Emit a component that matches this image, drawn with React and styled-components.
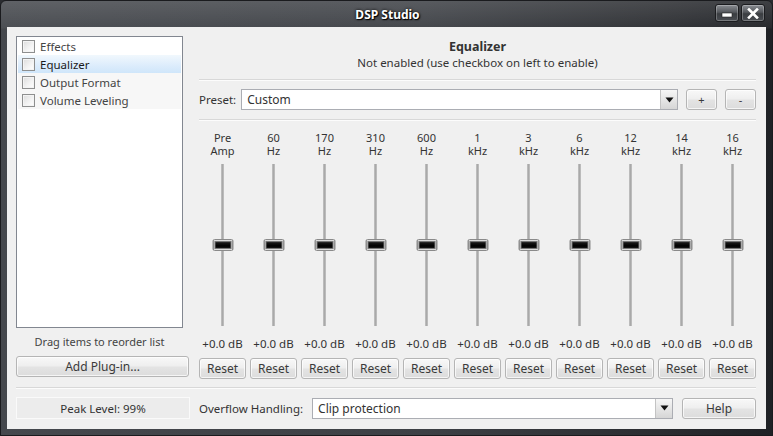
import React from 'react';
import styled, { createGlobalStyle } from 'styled-components';

const GlobalStyle = createGlobalStyle`
  html, body { margin: 0; padding: 0; background: #2a2c30; }
  body { font-family: "Noto Sans", "Open Sans", sans-serif; font-size: 11.5px; color: #3c3c3c; }
  * { box-sizing: border-box; }
`;

const plugins = [
  { name: 'Effects' },
  { name: 'Equalizer', selected: true },
  { name: 'Output Format', shaded: true },
  { name: 'Volume Leveling', shaded: true },
];

const bands = [
  ['Pre', 'Amp'], ['60', 'Hz'], ['170', 'Hz'], ['310', 'Hz'], ['600', 'Hz'],
  ['1', 'kHz'], ['3', 'kHz'], ['6', 'kHz'], ['12', 'kHz'], ['14', 'kHz'], ['16', 'kHz'],
];

const Chevron = () => (
  <svg width="9" height="6" viewBox="0 0 9 6">
    <path d="M0.5 0.5 L8.5 0.5 L4.5 5.5 Z" fill="#111" />
  </svg>
);

const Select = ({ value }) => (
  <SelectBox>
    <span>{value}</span>
    <ArrowButton><Chevron /></ArrowButton>
  </SelectBox>
);

export default function App() {
  return (
    <>
      <GlobalStyle />
      <Window>
        <TitleBar>
          <Title>DSP Studio</Title>
          <Caption>
            <CaptionButton>
              <svg width="12" height="10" viewBox="0 0 12 10">
                <rect x="1" y="5" width="10" height="4" fill="#fff" stroke="#222" strokeWidth="0.6" />
              </svg>
            </CaptionButton>
            <CaptionButton>
              <svg width="12" height="11" viewBox="0 0 12 11">
                <path d="M2 1.5 L10 9.5 M10 1.5 L2 9.5" stroke="#fff" strokeWidth="2.6" strokeLinecap="square" />
              </svg>
            </CaptionButton>
          </Caption>
        </TitleBar>

        <Client>
          <TopArea>
            <LeftColumn>
              <ListBox>
                {plugins.map(p => (
                  <ListItem key={p.name} $selected={p.selected} $shaded={p.shaded}>
                    <CheckBox />
                    {p.name}
                  </ListItem>
                ))}
              </ListBox>
              <Hint>Drag items to reorder list</Hint>
              <Button $wide>Add Plug-in...</Button>
            </LeftColumn>

            <RightColumn>
              <Header>
                <h2>Equalizer</h2>
                <p>Not enabled (use checkbox on left to enable)</p>
              </Header>
              <Separator $top />
              <PresetRow>
                <Label>Preset:</Label>
                <Select value="Custom" />
                <SmallButton>+</SmallButton>
                <SmallButton>-</SmallButton>
              </PresetRow>
              <Separator />
              <Bands>
                {bands.map(([top, unit]) => (
                  <Band key={top}>
                    <BandLabel>
                      <span>{top}</span>
                      <span>{unit}</span>
                    </BandLabel>
                    <Track>
                      <Thumb />
                    </Track>
                    <Value>+0.0 dB</Value>
                    <Button>Reset</Button>
                  </Band>
                ))}
              </Bands>
            </RightColumn>
          </TopArea>

          <Separator />

          <BottomRow>
            <PeakBox>Peak Level: 99%</PeakBox>
            <Label $overflow>Overflow Handling:</Label>
            <Select value="Clip protection" />
            <Button $help>Help</Button>
          </BottomRow>
        </Client>
      </Window>
    </>
  );
}

const Window = styled.div`
  width: 773px; height: 436px;
  display: flex; flex-direction: column;
  border-radius: 6px 6px 0 0;
  background:
    linear-gradient(180deg, rgba(255,255,255,0.14) 0, rgba(255,255,255,0.04) 27px, rgba(0,0,0,0) 28px),
    linear-gradient(90deg, #45484d 0, #3d4045 55%, #2b2d31 85%, #1f2125 100%);
  border: 1px solid #1a1b1e;
`;

const TitleBar = styled.div`
  height: 26px; flex: none;
  display: flex; align-items: center; justify-content: center;
  position: relative;
`;

const Title = styled.div`
  font-family: "Noto Sans", sans-serif; font-weight: 700; font-size: 12px;
  color: #fff; text-shadow: 0 0 3px #000, 1px 1px 1px #000;
  margin-left: 2px;
`;

const Caption = styled.div`
  position: absolute; right: 7px; top: 3px;
  display: flex; gap: 2px;
`;

const CaptionButton = styled.div`
  width: 24px; height: 18px;
  display: flex; align-items: center; justify-content: center;
  border: 1px solid #1b1c1f; border-radius: 3px;
  background: linear-gradient(180deg, #8a8d92 0, #55585d 45%, #3a3d41 55%, #4a4d52 100%);
  box-shadow: inset 0 0 0 1px rgba(255,255,255,0.25);
`;

const Client = styled.div`
  flex: 1;
  margin: 0 6px 6px 6px;
  background: #f0f0f0;
  padding: 9px 10px 0 9px;
  display: flex; flex-direction: column;
`;

const TopArea = styled.div`
  display: flex; gap: 9px; height: 342px;
`;

const LeftColumn = styled.div`
  width: 174px; flex: none;
  display: flex; flex-direction: column;
`;

const ListBox = styled.div`
  width: 167px; height: 292px;
  background: #fff;
  border: 1px solid #828790;
  padding: 0 1px;
`;

const ListItem = styled.div`
  height: 18px;
  display: flex; align-items: center; gap: 5px;
  padding-left: 4px;
  color: ${({ $selected }) => $selected ? '#1a1a1a' : '#444'};
  background: ${({ $selected, $shaded }) =>
    $selected ? 'linear-gradient(180deg, #f1f8fd 0, #dcecfc 60%, #cfe6fa 100%)'
      : $shaded ? '#f7f7f7' : 'transparent'};
`;

const CheckBox = styled.span`
  width: 13px; height: 13px; flex: none;
  border: 1px solid #8e8f8f;
  background: linear-gradient(135deg, #dcdcdc 0, #f4f4f4 60%, #fff 100%);
  box-shadow: inset 0 0 0 1px #f4f4f4;
`;

const Hint = styled.div`
  width: 167px; text-align: center;
  margin-top: 6px; line-height: 15px;
  color: #444;
  font-size: 11px;
`;

const Button = styled.div`
  height: 21px; flex: none;
  width: ${({ $wide, $help }) => $wide ? '173px' : $help ? '74px' : '47px'};
  margin-top: ${({ $wide }) => $wide ? '7px' : '0'};
  display: flex; align-items: center; justify-content: center;
  border: 1px solid #b5b5b5; border-radius: 3px;
  background: linear-gradient(180deg, #f8f8f8 0, #efefef 45%, #e3e3e3 55%, #dcdcdc 100%);
  box-shadow: inset 0 0 0 1px rgba(255,255,255,0.7);
  color: #3a3a3a;
  font-size: 12px;
`;

const SmallButton = styled(Button)`
  width: 31px; height: 21px; font-size: 11px;
`;

const RightColumn = styled.div`
  flex: 1;
  display: flex; flex-direction: column;
`;

const Header = styled.div`
  text-align: center; padding-top: 2px;
  h2 { margin: 0; font-size: 12.5px; font-weight: 700; color: #333; line-height: 17px; }
  p { margin: 0; line-height: 16px; color: #333; }
`;

const Separator = styled.div`
  height: 2px; flex: none;
  border-top: 1px solid #d8d8d8; border-bottom: 1px solid #fcfcfc;
  margin: ${({ $top }) => $top ? '8px 0 8px 0' : '9px 0 8px 0'};
`;

const PresetRow = styled.div`
  display: flex; align-items: center; gap: 8px;
`;

const Label = styled.div`
  color: #333;
  flex: none;
  margin-right: ${({ $overflow }) => $overflow ? '0' : '-3px'};
`;

const SelectBox = styled.div`
  flex: 1; height: 21px;
  display: flex; align-items: center; justify-content: space-between;
  background: #fff;
  border: 1px solid #abadb3;
  padding-left: 5px;
  color: #333;
  font-size: 12px;
`;

const ArrowButton = styled.div`
  width: 17px; height: 19px;
  display: flex; align-items: center; justify-content: center;
  border-left: 1px solid #c3c3c3;
  background: linear-gradient(180deg, #f6f6f6 0, #e6e6e6 50%, #d6d6d6 100%);
`;

const Bands = styled.div`
  display: flex; justify-content: space-between;
  padding-top: 2px;
`;

const Band = styled.div`
  width: 47px;
  display: flex; flex-direction: column; align-items: center;
`;

const BandLabel = styled.div`
  display: flex; flex-direction: column; align-items: center;
  color: #333; font-size: 11px;
  span { display: block; height: 13px; line-height: 13px; }
`;

const Track = styled.div`
  margin-top: 7px;
  width: 3px; height: 162px;
  background: linear-gradient(90deg, #c4c4c4, #a9a9a9, #c4c4c4);
  position: relative;
`;

const Thumb = styled.div`
  position: absolute; left: 50%; top: 75px;
  transform: translateX(-50%);
  width: 21px; height: 12px;
  border: 1px solid #8a8a8a; border-radius: 2px;
  background: linear-gradient(180deg, #5a5a5a 0, #111 35%, #000 60%, #2c2c2c 100%);
  box-shadow: inset 0 0 0 1px #dcdcdc, inset 0 0 0 2px #777;
`;

const Value = styled.div`
  margin-top: 10px; line-height: 15px; color: #333;
  white-space: nowrap;
  margin-bottom: 7px;
`;

const BottomRow = styled.div`
  display: flex; align-items: center; gap: 9px;
`;

const PeakBox = styled.div`
  width: 174px; height: 22px;
  display: flex; align-items: center; justify-content: center;
  border: 1px solid #fafafa;
  background: #ececec;
  color: #333;
`;
